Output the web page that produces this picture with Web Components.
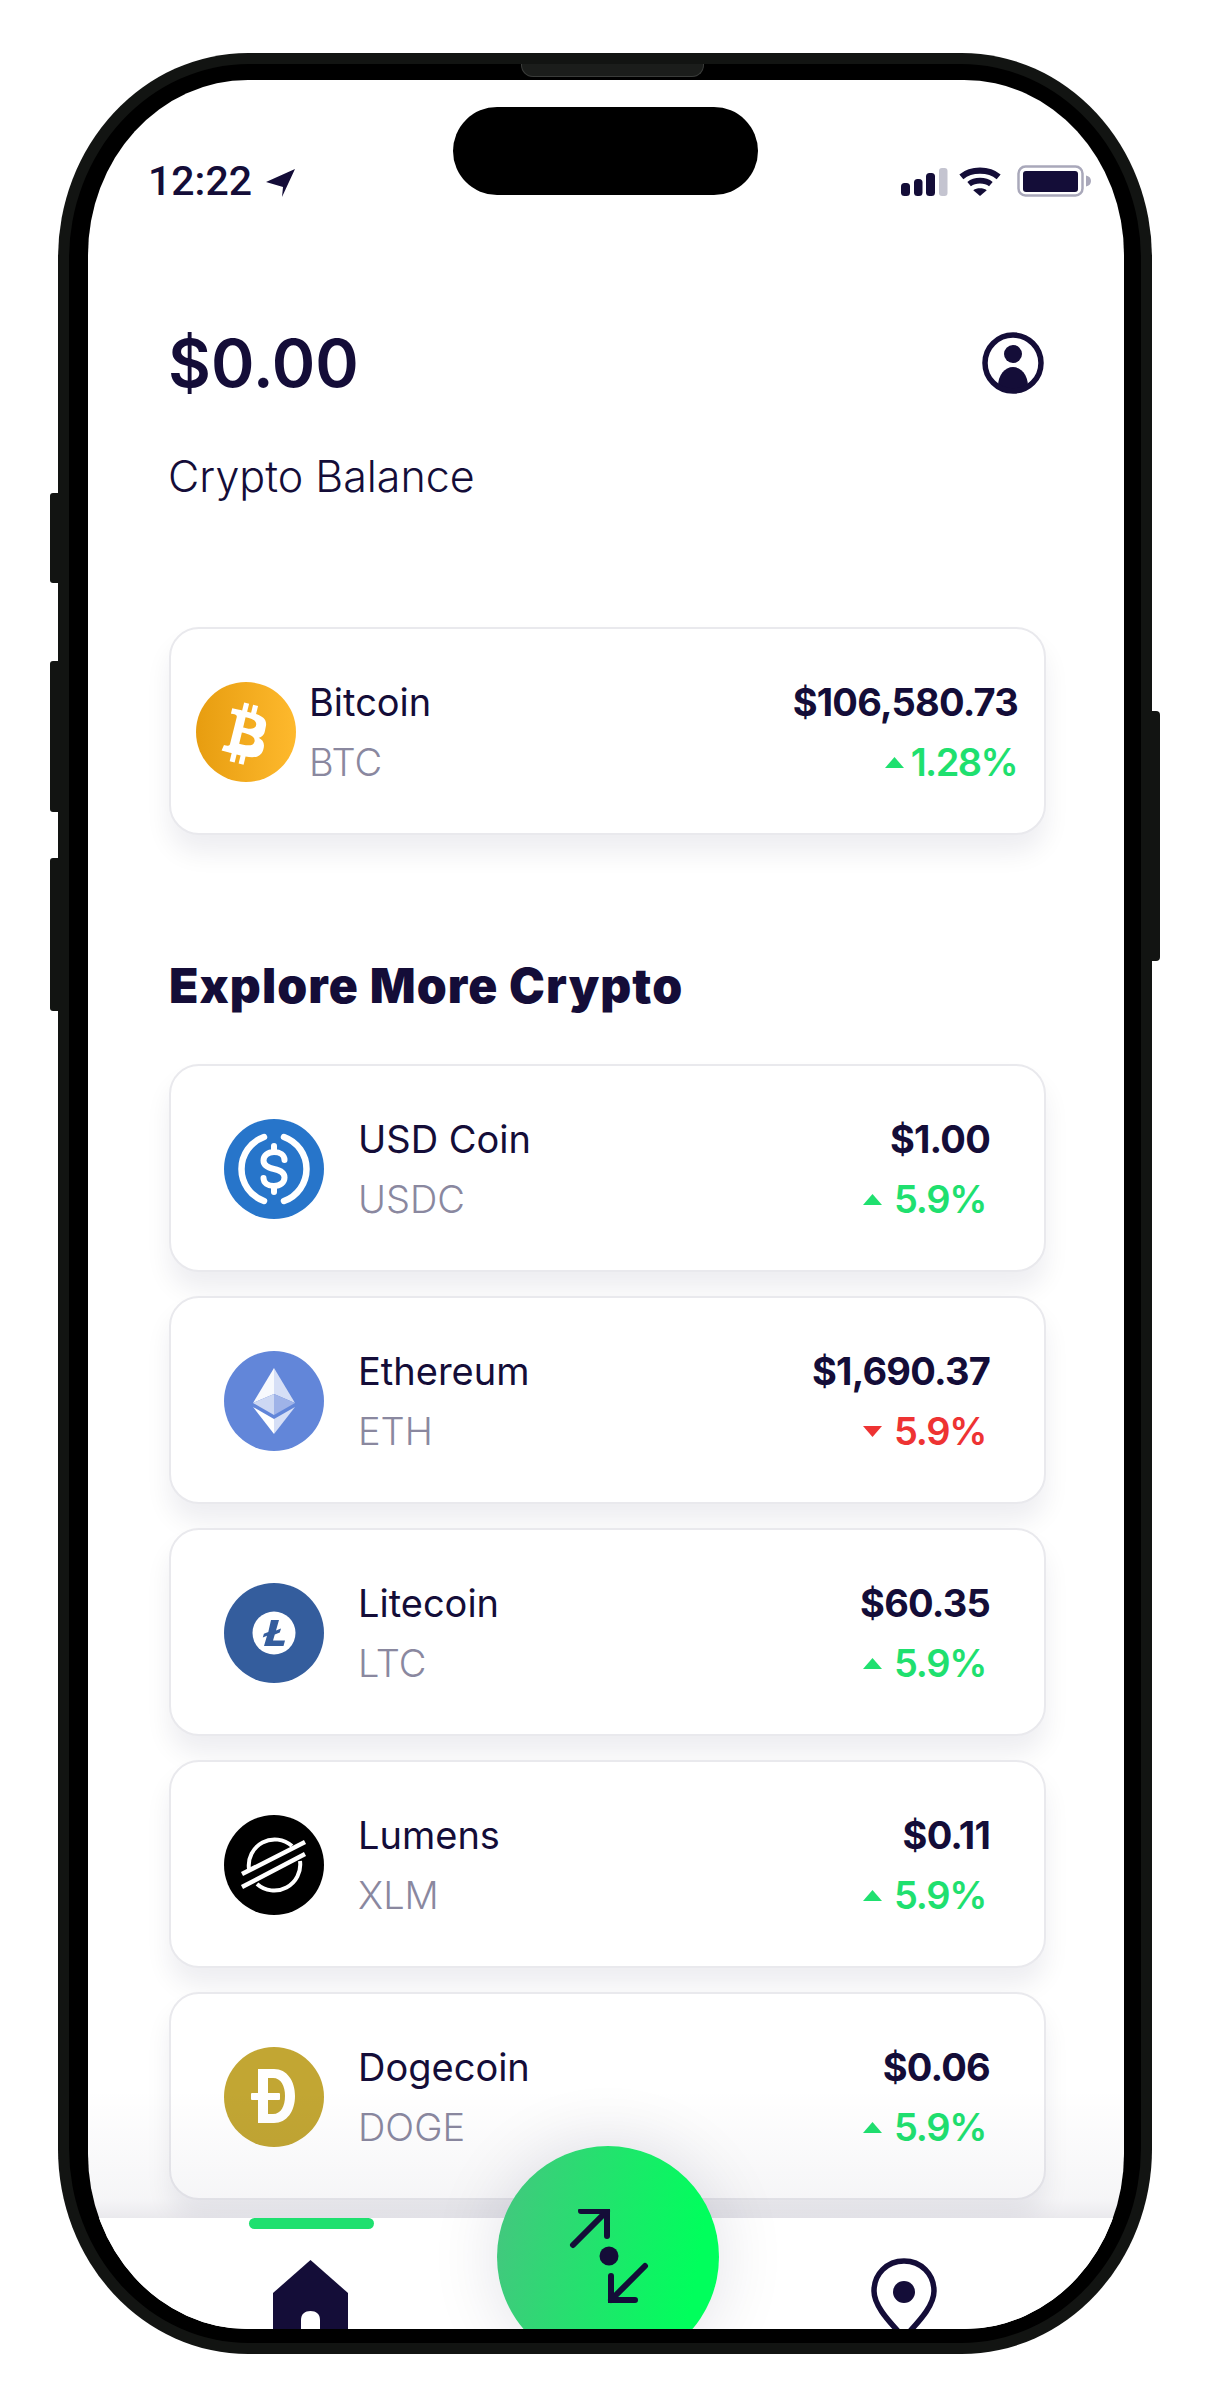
<!DOCTYPE html>
<html lang="en">
<head>
<meta charset="utf-8">
<title>Crypto Balance</title>
<style>
  html, body { margin: 0; padding: 0; background: #fff; }
  body { width: 1215px; height: 2399px; overflow: hidden; font-family: "Inter", "Liberation Sans", sans-serif; color: #140d38; }
</style>
</head>
<body>
<phone-frame>
  <status-bar time="12:22"></status-bar>
  <balance-header amount="$0.00" label="Crypto Balance"></balance-header>
  <coin-card compact name="Bitcoin" symbol="BTC" price="$106,580.73" change="1.28%" dir="up"><coin-icon slot="icon" kind="btc"></coin-icon></coin-card>
  <coin-section heading="Explore More Crypto">
    <coin-card name="USD Coin" symbol="USDC" price="$1.00" change="5.9%" dir="up"><coin-icon slot="icon" kind="usdc"></coin-icon></coin-card>
    <coin-card name="Ethereum" symbol="ETH" price="$1,690.37" change="5.9%" dir="down"><coin-icon slot="icon" kind="eth"></coin-icon></coin-card>
    <coin-card name="Litecoin" symbol="LTC" price="$60.35" change="5.9%" dir="up"><coin-icon slot="icon" kind="ltc"></coin-icon></coin-card>
    <coin-card name="Lumens" symbol="XLM" price="$0.11" change="5.9%" dir="up"><coin-icon slot="icon" kind="xlm"></coin-icon></coin-card>
    <coin-card name="Dogecoin" symbol="DOGE" price="$0.06" change="5.9%" dir="up"><coin-icon slot="icon" kind="doge"></coin-icon></coin-card>
  </coin-section>
  <tab-bar slot="overlay"></tab-bar>
</phone-frame>

<script>
const INK = '#140d38';

// Device shell: outer band, black bezel, then the clipped screen
class PhoneFrame extends HTMLElement {
  constructor() {
    super();
    this.attachShadow({ mode: 'open' }).innerHTML = `
      <style>
        :host { display: block; position: relative; box-sizing: border-box; width: 1094px; height: 2301px; margin: 53px 0 0 58px; padding: 11px; background: #121412; border-radius: 190px / 205px; }
        .bezel { box-sizing: border-box; height: 100%; padding: 16px 17px 14px 19px; background: #000; border-radius: 180px / 195px; }
        .screen { position: relative; height: 100%; overflow: hidden; background: #fff; border-radius: 160px / 175px; }
        .speaker { position: absolute; left: 463px; top: 11px; width: 183px; height: 13px; box-sizing: border-box; background: #1b1d1b; border: 1px solid #3a3c3a; border-top: 0; border-radius: 0 0 12px 12px; }
        .island { position: absolute; left: 395px; top: 54px; width: 305px; height: 88px; background: #000; border-radius: 44px; z-index: 3; }
        .side { position: absolute; background: #121412; }
        .l { left: -8px; width: 8px; border-radius: 3px 0 0 3px; }
        .r { right: -8px; width: 8px; border-radius: 0 4px 4px 0; }
      </style>
      <span class="side l" style="top:440px;height:90px"></span>
      <span class="side l" style="top:608px;height:151px"></span>
      <span class="side l" style="top:805px;height:153px"></span>
      <span class="side r" style="top:658px;height:250px"></span>
      <div class="speaker"></div>
      <div class="island"></div>
      <div class="bezel"><div class="screen"><slot></slot><slot name="overlay"></slot></div></div>
    `;
  }
}

class StatusBar extends HTMLElement {
  constructor() {
    super();
    this.attachShadow({ mode: 'open' });
  }
  connectedCallback() {
    this.shadowRoot.innerHTML = `
      <style>
        :host { display: flex; align-items: center; justify-content: space-between; box-sizing: border-box; height: 120px; padding: 82px 32px 0 60px; }
        .left, .right { display: flex; align-items: center; }
        .time { font: 500 41px/38px "Roboto", sans-serif; color: ${INK}; }
        .arrow { margin: 4px 0 0 14px; }
        .wifi { margin: 0 16px 0 11px; }
        svg { display: block; }
      </style>
      <div class="left">
        <span class="time">${this.getAttribute('time')}</span>
        <svg class="arrow" width="30" height="30" viewBox="0 0 30 30"><path fill="${INK}" d="M0 14 29 1 16 29 17 19Z"/></svg>
      </div>
      <div class="right">
        <svg width="47" height="29" viewBox="0 0 47 29">
          <rect x="0" y="16" width="9" height="13" rx="3.5" fill="${INK}"/>
          <rect x="13" y="12" width="8.5" height="17" rx="3.5" fill="${INK}"/>
          <rect x="25" y="6" width="9" height="23" rx="3.5" fill="${INK}"/>
          <rect x="38" y="1" width="8.5" height="28" rx="3" fill="#c4c4d0"/>
        </svg>
        <svg class="wifi" width="42" height="29" viewBox="0 0 40 28" fill="none" stroke="${INK}">
          <path stroke-width="6" d="M2 9.5C11.500 1.500 28.500 1.500 38 9.500"/>
          <path stroke-width="5.500" d="M9.500 16.500C15 12 25 12 30.500 16.500"/>
          <path fill="${INK}" stroke="none" d="M13.500 22.500C17 20 23 20 26.500 22.500L20 28Z"/>
        </svg>
        <svg width="75" height="32" viewBox="0 0 75 32">
          <rect x="1.500" y="1.500" width="64" height="29" rx="7" fill="none" stroke="#a9a8ba" stroke-width="2.500"/>
          <rect x="6" y="6" width="55" height="21" rx="3" fill="${INK}"/>
          <path fill="#a9a8ba" d="M69 10.500C72 11 74 13 74 16S72 21 69 21.500Z"/>
        </svg>
      </div>
    `;
  }
}

class BalanceHeader extends HTMLElement {
  constructor() {
    super();
    this.attachShadow({ mode: 'open' });
  }
  connectedCallback() {
    this.shadowRoot.innerHTML = `
      <style>
        :host { display: block; padding: 128px 80px 0 80px; }
        .row { display: flex; align-items: center; justify-content: space-between; height: 70px; }
        .amount { font: 600 66px/70px "Inter", sans-serif; color: ${INK}; }
        .label { margin-top: 53px; font: 300 43px/50px "Inter", sans-serif; color: ${INK}; }
        svg { display: block; }
      </style>
      <div class="row">
        <span class="amount">${this.getAttribute('amount')}</span>
        <svg width="62" height="62" viewBox="0 0 62 62">
          <defs><clipPath id="disc"><circle cx="31" cy="31" r="28"/></clipPath></defs>
          <circle cx="31" cy="22" r="9" fill="${INK}"/>
          <ellipse cx="31" cy="54" rx="15" ry="19" fill="${INK}" clip-path="url(#disc)"/>
          <circle cx="31" cy="31" r="28" fill="none" stroke="${INK}" stroke-width="5.500"/>
        </svg>
      </div>
      <div class="label">${this.getAttribute('label')}</div>
    `;
  }
}

class CoinCard extends HTMLElement {
  constructor() {
    super();
    this.attachShadow({ mode: 'open' });
  }
  connectedCallback() {
    const up = this.getAttribute('dir') === 'up';
    const tint = up ? '#1fe06f' : '#ee3333';
    const tri = up ? 'M0 11 9.500 0 19 11Z' : 'M0 0H19L9.500 11Z';
    this.shadowRoot.innerHTML = `
      <style>
        :host { display: flex; align-items: center; box-sizing: border-box; height: 208px; margin: 0 78px 0 81px; padding: 2px 54px 0 53px; gap: 34px; background: #fff; border: 2px solid #e9e9ed; border-radius: 30px; box-shadow: 0 18px 26px rgba(20, 13, 56, .07); }
        :host([compact]) { padding: 2px 26px 0 25px; gap: 13px; margin-top: 126px; }
        .col { display: flex; flex-direction: column; }
        .name { font: 400 38px/60px "Inter", sans-serif; color: ${INK}; }
        .symbol { font: 300 38px/60px "Inter", sans-serif; color: #8a889f; }
        .end { margin-left: auto; align-items: flex-end; }
        .price { font: 700 38px/60px "Inter", sans-serif; letter-spacing: -.8px; color: ${INK}; }
        .change { display: flex; align-items: center; gap: 12px; padding-right: 4px; font: 600 38px/60px "Inter", sans-serif; letter-spacing: -1.3px; color: ${tint}; }
        :host([compact]) .change { gap: 7px; padding-right: 1px; letter-spacing: -1.6px; }
        svg { display: block; }
      </style>
      <slot name="icon"></slot>
      <div class="col">
        <span class="name">${this.getAttribute('name')}</span>
        <span class="symbol">${this.getAttribute('symbol')}</span>
      </div>
      <div class="col end">
        <span class="price">${this.getAttribute('price')}</span>
        <span class="change"><svg width="19" height="11" viewBox="0 0 19 11"><path fill="${tint}" d="${tri}"/></svg>${this.getAttribute('change')}</span>
      </div>
    `;
  }
}

// Coin logos, all on a 100 unit grid
const COIN_LOGOS = {
  btc: `<defs><linearGradient id="g"><stop offset="0" stop-color="#e79d10"/><stop offset="1" stop-color="#feb92d"/></linearGradient></defs>
    <circle cx="50" cy="50" r="50" fill="url(#g)"/>
    <g transform="translate(50 50) scale(1.42) translate(-32 -32)"><path fill="#fff" fill-rule="evenodd" d="M46.1 27.400c.6-4.200-2.600-6.500-7-8l1.400-5.700-3.500-.9-1.400 5.600c-.9-.2-1.900-.4-2.800-.7l1.400-5.600-3.500-.9-1.400 5.700c-.8-.2-1.500-.3-2.200-.5l-4.800-1.200-.9 3.700s2.600.6 2.500.6c1.400.4 1.700 1.300 1.600 2l-1.600 6.400-3.200 12.800c-.2.500-.7 1.200-1.700 1 0 0-2.500-.6-2.500-.6l-1.700 4 4.600 1.100c.9.2 1.700.4 2.500.6l-1.400 5.800 3.500.9 1.400-5.700c1 .3 1.900.5 2.800.7l-1.400 5.700 3.500.9 1.400-5.800c6 1.100 10.500.7 12.400-4.700 1.500-4.400-.1-6.900-3.200-8.500 2.300-.5 4-2 4.500-5.100zM38 38.800c-1.100 4.400-8.400 2-10.800 1.400l1.900-7.800c2.400.6 10 1.800 8.900 6.400zm1.100-11.500c-1 4-7.100 2-9.100 1.500l1.700-7.100c2 .5 8.400 1.400 7.400 5.600z"/></g>`,
  usdc: `<circle cx="50" cy="50" r="50" fill="#2775ca"/>
    <g fill="none" stroke="#fff" stroke-linecap="round">
      <path stroke-width="6.500" d="M40 18A34 34 0 0 0 40 82M60 18A34 34 0 0 1 60 82"/>
      <path stroke-width="6" d="M60.500 41C60.500 36 56 33 50 33S39.500 36.500 39.500 41.500C39.500 47.500 45 49 50 50S60.500 53 60.500 58.500C60.500 63.500 56 67 50 67S39.500 64 39.500 59M50 27V33M50 67V73"/>
    </g>`,
  eth: `<circle cx="50" cy="50" r="50" fill="#6286d9"/>
    <path fill="#fff" fill-opacity=".95" d="M50 17 29 52 50 43Z"/>
    <path fill="#d6dff6" d="M50 17 71 52 50 43Z"/>
    <path fill="#cdd8f3" d="M29 52 50 43V64Z"/>
    <path fill="#9fb3e8" d="M71 52 50 43V64Z"/>
    <path fill="#fff" d="M29 56 50 68V83Z"/>
    <path fill="#d6dff6" d="M71 56 50 68V83Z"/>`,
  ltc: `<circle cx="50" cy="50" r="50" fill="#345d9d"/>
    <circle cx="50" cy="50" r="21.500" fill="#fff"/>
    <path fill="#345d9d" d="M47 37H55L52 47.500 57 45.500 55.800 49.500 50.800 51.500 49 57.500H61L59.500 63H40L43 52.800 38.800 54.400 39.900 50.800 44.300 49Z"/>`,
  xlm: `<circle cx="50" cy="50" r="50" fill="#000"/>
    <g fill="none" stroke="#fff">
      <path stroke-width="4" d="M25 54A26 26 0 0 1 68 31M76 46A26 26 0 0 1 33 69"/>
      <path stroke-width="4.500" d="M18 59 81 27M18 72 81 39"/>
    </g>`,
  doge: `<circle cx="50" cy="50" r="50" fill="#c2a633"/>
    <path fill="#fff" fill-rule="evenodd" d="M34 22H50C63 22 71 34 71 49S63 76 50 76H34ZM44 31V67H49C57 67 61 59 61 49S57 31 49 31Z"/>
    <rect x="27" y="46" width="29" height="7" rx="1" fill="#fff"/>`
};

class CoinIcon extends HTMLElement {
  constructor() {
    super();
    this.attachShadow({ mode: 'open' });
  }
  connectedCallback() {
    this.shadowRoot.innerHTML = `
      <style>:host { display: block; flex: none; width: 100px; height: 100px; } svg { display: block; }</style>
      <svg width="100" height="100" viewBox="0 0 100 100">${COIN_LOGOS[this.getAttribute('kind')]}</svg>
    `;
  }
}

class CoinSection extends HTMLElement {
  constructor() {
    super();
    this.attachShadow({ mode: 'open' });
  }
  connectedCallback() {
    this.shadowRoot.innerHTML = `
      <style>
        :host { display: block; }
        h2 { margin: 121px 78px 48px 81px; font: 900 48px/60px "Inter", sans-serif; letter-spacing: 1.1px; color: ${INK}; }
        .list { display: grid; gap: 24px; }
      </style>
      <h2>${this.getAttribute('heading')}</h2>
      <div class="list"><slot></slot></div>
    `;
  }
}

// Bottom bar, floats over the list and gets clipped by the screen corners
class TabBar extends HTMLElement {
  constructor() {
    super();
    this.attachShadow({ mode: 'open' }).innerHTML = `
      <style>
        :host { display: block; position: absolute; left: 0; right: 0; bottom: 0; height: 111px; background: #fff; }
        .fade { position: absolute; left: 0; right: 0; bottom: 100%; height: 130px; background: linear-gradient(rgba(20, 13, 56, 0), rgba(20, 13, 56, .04) 85%, rgba(20, 13, 56, .09)); }
        .marker { position: absolute; left: 161px; top: 0; width: 125px; height: 11px; border-radius: 6px; background: #1fe06f; }
        .fab { position: absolute; left: 409px; top: -72px; width: 222px; height: 222px; border-radius: 50%; background: linear-gradient(100deg, #47c480, #00ff5c 85%); box-shadow: 0 0 70px rgba(20, 13, 56, .12); }
        .home, .pin, .arrows { position: absolute; display: block; }
        .home { left: 185px; top: 42px; }
        .pin { left: 783px; top: 40px; }
        .arrows { left: 72px; top: 63px; }
      </style>
      <div class="fade"></div>
      <div class="marker"></div>
      <svg class="home" width="75" height="70" viewBox="0 0 75 70">
        <path fill="${INK}" d="M37.500 0 75 33V70H0V33Z"/>
        <path fill="#fff" d="M28 70V60C28 54 32 51 37.500 51S47 54 47 60V70Z"/>
      </svg>
      <svg class="pin" width="66" height="90" viewBox="0 0 66 90">
        <path fill="none" stroke="${INK}" stroke-width="5.500" d="M33 3C16 3 3 16 3 33 3 50 23 68 33 80 43 68 63 50 63 33 63 16 50 3 33 3Z"/>
        <circle cx="33" cy="34" r="11" fill="${INK}"/>
      </svg>
      <div class="fab">
        <svg class="arrows" width="80" height="96" viewBox="0 0 80 96" fill="none" stroke="${INK}" stroke-width="6" stroke-linecap="round">
          <path d="M4 36 38 2M12 2H38V27"/>
          <circle cx="40" cy="47" r="9.500" fill="${INK}" stroke="none"/>
          <path d="M76 57 42 91M42 67V91H66"/>
        </svg>
      </div>
    `;
  }
}

customElements.define('phone-frame', PhoneFrame);
customElements.define('status-bar', StatusBar);
customElements.define('balance-header', BalanceHeader);
customElements.define('coin-card', CoinCard);
customElements.define('coin-icon', CoinIcon);
customElements.define('coin-section', CoinSection);
customElements.define('tab-bar', TabBar);
</script>
</body>
</html>
